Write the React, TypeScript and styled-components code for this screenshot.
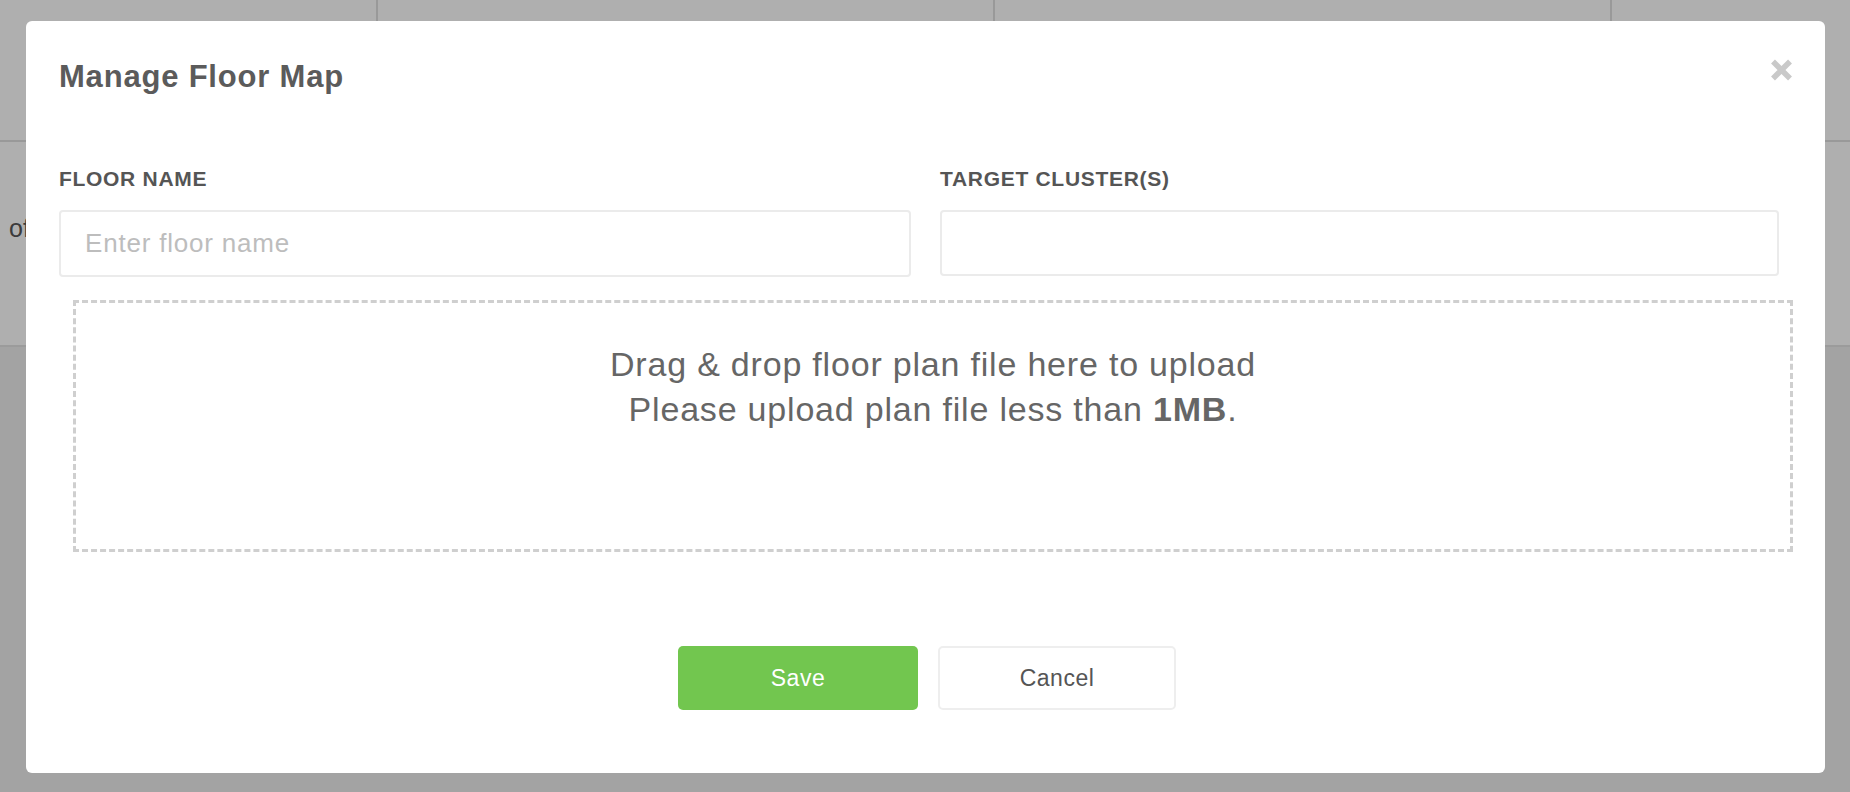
import styled, { createGlobalStyle } from 'styled-components'

const GlobalStyle = createGlobalStyle`
  html, body {
    margin: 0;
    padding: 0;
  }
  body {
    font-family: "Liberation Sans", Arial, Helvetica, sans-serif;
    background: #eaeaea;
    overflow: hidden;
  }
  * {
    box-sizing: border-box;
  }
`

// page that sits behind the dialog
const Page = styled.div`
  min-height: 100vh;
  background: #eaeaea;
`

const Table = styled.div`
  background: #fbfbfb;
  border-bottom: 2px solid #dedede;
`

const HeadRow = styled.div`
  display: grid;
  grid-template-columns: 378px 617px 617px 1fr;
  height: 142px;
  border-bottom: 2px solid #dcdcdc;
`

const HeadCell = styled.div<{ $last?: boolean }>`
  border-right: ${(p) => (p.$last ? 'none' : '2px solid #dcdcdc')};
`

const BodyRow = styled.div`
  height: 203px;
  padding: 72px 0 0 9px;
  font-size: 25px;
  line-height: 29px;
  color: #555;
`

// dialog
const Overlay = styled.div`
  position: fixed;
  inset: 0;
  background: rgba(0, 0, 0, 0.3);
`

const Modal = styled.div`
  position: fixed;
  left: 26px;
  top: 21px;
  width: 1799px;
  height: 752px;
  background: #fff;
  border-radius: 6px;
  padding: 37px 33px 63px;
  display: flex;
  flex-direction: column;
`

const Header = styled.div`
  display: flex;
  justify-content: space-between;
  align-items: center;
  height: 34px;
  margin-bottom: 74px;
`

const Title = styled.h4`
  margin: 0;
  padding-top: 4px;
  font-size: 31px;
  line-height: 34px;
  font-weight: 700;
  letter-spacing: 0.8px;
  color: #5b5b5b;
`

const CloseButton = styled.button`
  border: none;
  background: none;
  padding: 0;
  width: 21px;
  height: 22px;
  margin-top: -10px;
  display: flex;
  cursor: pointer;
`

const FieldRow = styled.div`
  display: grid;
  grid-template-columns: 852px 839px;
  column-gap: 29px;
`

const Field = styled.div`
  display: flex;
  flex-direction: column;
`

const Label = styled.label`
  font-size: 21px;
  line-height: 26px;
  font-weight: 700;
  letter-spacing: 0.7px;
  color: #555;
  margin-bottom: 18px;
`

const Input = styled.input<{ $h: number }>`
  height: ${(p) => p.$h}px;
  border: 2px solid #ebebeb;
  border-radius: 4px;
  padding: 0 24px;
  font-family: inherit;
  font-size: 26px;
  letter-spacing: 0.8px;
  color: #555;
  outline: none;
  &::placeholder {
    color: #bdbdbd;
  }
`

const DropZone = styled.div`
  margin: 23px 0 0 14px;
  width: 1720px;
  height: 252px;
  border: 3px dashed #cfcfcf;
  padding-top: 39px;
  text-align: center;
  font-size: 34px;
  line-height: 45px;
  letter-spacing: 0.8px;
  color: #666;
  b {
    font-weight: 700;
  }
`

const Footer = styled.div`
  margin-top: 94px;
  padding-left: 3px;
  display: flex;
  justify-content: center;
  gap: 20px;
`

const Button = styled.button<{ $primary?: boolean }>`
  width: ${(p) => (p.$primary ? 240 : 238)}px;
  height: 64px;
  border-radius: 5px;
  font-family: inherit;
  font-size: 23px;
  letter-spacing: 0.5px;
  cursor: pointer;
  border: ${(p) => (p.$primary ? 'none' : '2px solid #eeeeee')};
  background: ${(p) => (p.$primary ? '#72c64f' : '#fff')};
  color: ${(p) => (p.$primary ? '#fff' : '#555')};
`

function CloseIcon() {
  return (
    <svg width="21" height="22" viewBox="0 0 21 22">
      <path d="M2 2.5 L19 19.5 M19 2.5 L2 19.5" stroke="#c9c9c9" strokeWidth="5.5" fill="none" />
    </svg>
  )
}

export default function App() {
  return (
    <>
      <GlobalStyle />
      <Page>
        <Table>
          <HeadRow>
            <HeadCell />
            <HeadCell />
            <HeadCell />
            <HeadCell $last />
          </HeadRow>
          <BodyRow>of</BodyRow>
        </Table>
      </Page>
      <Overlay />
      <Modal>
        <Header>
          <Title>Manage Floor Map</Title>
          <CloseButton aria-label="Close">
            <CloseIcon />
          </CloseButton>
        </Header>
        <FieldRow>
          <Field>
            <Label>FLOOR NAME</Label>
            <Input $h={67} placeholder="Enter floor name" />
          </Field>
          <Field>
            <Label>TARGET CLUSTER(S)</Label>
            <Input $h={66} />
          </Field>
        </FieldRow>
        <DropZone>
          Drag &amp; drop floor plan file here to upload
          <br />
          Please upload plan file less than <b>1MB</b>.
        </DropZone>
        <Footer>
          <Button $primary>Save</Button>
          <Button>Cancel</Button>
        </Footer>
      </Modal>
    </>
  )
}
